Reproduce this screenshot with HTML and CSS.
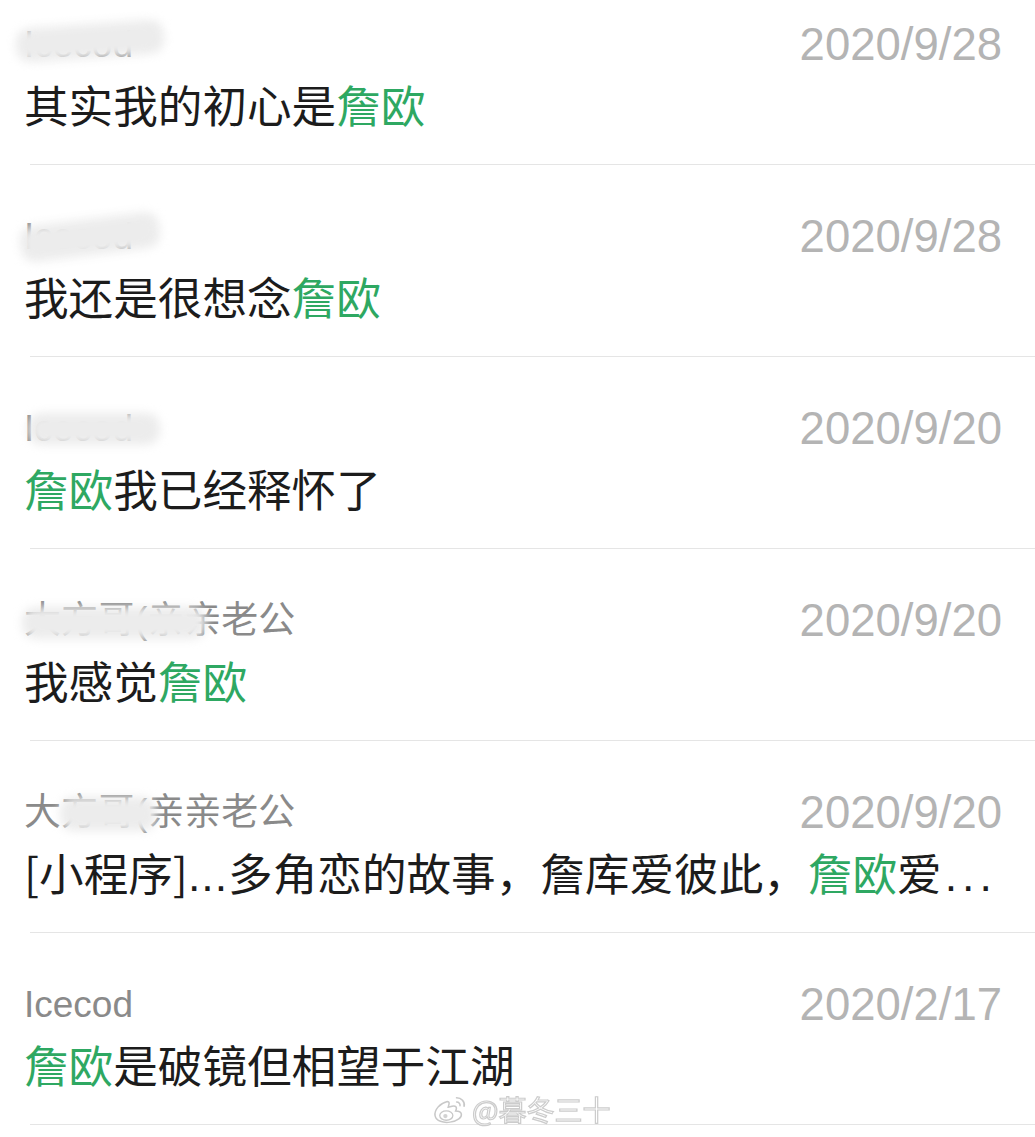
FILE: index.html
```html
<!DOCTYPE html>
<html lang="zh-CN">
<head>
<meta charset="utf-8">
<title>搜索结果</title>
<link rel="stylesheet" href="styles.css">
</head>
<body>
<div class="list">
  <div class="item first">
    <div class="body">
      <div class="head"><span class="name">Icecod<span class="smudge s1"></span></span><span class="date">2020/9/28</span></div>
      <div class="msg">其实我的初心是<em>詹欧</em></div>
    </div>
  </div>
  <div class="item">
    <div class="body">
      <div class="head"><span class="name">Icecod<span class="smudge s2"></span></span><span class="date">2020/9/28</span></div>
      <div class="msg">我还是很想念<em>詹欧</em></div>
    </div>
  </div>
  <div class="item">
    <div class="body">
      <div class="head"><span class="name">Icecod<span class="smudge s3"></span></span><span class="date">2020/9/20</span></div>
      <div class="msg"><em>詹欧</em>我已经释怀了</div>
    </div>
  </div>
  <div class="item">
    <div class="body">
      <div class="head"><span class="name">大方哥(亲亲老公<span class="smudge s4"></span></span><span class="date">2020/9/20</span></div>
      <div class="msg">我感觉<em>詹欧</em></div>
    </div>
  </div>
  <div class="item">
    <div class="body">
      <div class="head"><span class="name">大方哥(亲亲老公<span class="smudge s5"></span></span><span class="date">2020/9/20</span></div>
      <div class="msg">[小程序]<span class="dots">...</span>多角恋的故事，詹库爱彼此，<em>詹欧</em>爱<span class="dots end">...</span></div>
    </div>
  </div>
  <div class="item">
    <div class="body">
      <div class="head"><span class="name">Icecod</span><span class="date">2020/2/17</span></div>
      <div class="msg"><em>詹欧</em>是破镜但相望于江湖</div>
    </div>
  </div>
</div>
<div class="watermark">
  <svg class="wb" viewBox="0 0 40 32" width="38" height="30">
    <path d="M16 8 C8 10 2 17 3 23 C4 29 12 31 19 30 C27 29 32 25 31 21 C30 18 27 18 25 18 C27 14 25 12 21 13 C19 13.5 18 14 17 14 C18 11 19 8 16 8 Z" fill="#fff" stroke="#c4c4c4" stroke-width="1.6"/>
    <ellipse cx="15" cy="23" rx="7" ry="5" fill="#fff" stroke="#c4c4c4" stroke-width="1.4"/>
    <circle cx="14" cy="23.5" r="2.3" fill="#cfcfcf"/>
    <path d="M26 4 C31 4 35 8 34 13" fill="none" stroke="#c4c4c4" stroke-width="1.8" stroke-linecap="round"/>
    <path d="M26 8.5 C28.5 8.5 30 10.5 29.6 12.5" fill="none" stroke="#c4c4c4" stroke-width="1.6" stroke-linecap="round"/>
  </svg>
  <span class="wm-text">@暮冬三十</span>
</div>
</body>
</html>
```

FILE: styles.css
```css
html, body {
  margin: 0;
  padding: 0;
  background: #ffffff;
}
body {
  width: 1035px;
  height: 1137px;
  overflow: hidden;
  position: relative;
  font-family: "Liberation Sans", "Noto Sans CJK SC", sans-serif;
}
.list {
  display: flex;
  flex-direction: column;
}
.item {
  margin-left: 30px;
  border-bottom: 1px solid #e5e5e5;
  padding: 47px 0 32px 0;
}
.item.first {
  padding-top: 20px;
}
.body {
  margin-left: -6px;
  padding-right: 33px;
  display: flex;
  flex-direction: column;
  gap: 6px;
}
.head {
  display: flex;
  justify-content: space-between;
  align-items: center;
  height: 50px;
}
.name {
  position: relative;
  font-size: 37px;
  color: #8a8a8a;
  font-family: "Liberation Sans", "Noto Sans CJK SC", sans-serif;
  line-height: 50px;
}
.date {
  font-size: 45.5px;
  color: #b4b4b4;
  line-height: 50px;
}
.msg {
  font-family: "Noto Sans CJK SC", "Liberation Sans", sans-serif;
  font-size: 44.6px;
  line-height: 56px;
  height: 56px;
  color: #1c1c1c;
  white-space: nowrap;
}
.msg em {
  font-style: normal;
  color: #2ea862;
}
.dots {
  font-family: "Liberation Sans", sans-serif;
  line-height: 0;
  letter-spacing: 1px;
}
.dots.end {
  letter-spacing: 5px;
  margin-left: 3px;
}
.smudge {
  position: absolute;
  display: block;
  background: #ececec;
  filter: blur(5px);
  border-radius: 14px;
}
.s1 { left: -8px; top: 4px; width: 148px; height: 34px; transform: rotate(-4deg); }
.s2 { left: -4px; top: 7px; width: 140px; height: 36px; transform: rotate(-7deg); }
.s3 { left: 4px; top: 9px; width: 132px; height: 32px; }
.s4 { left: -2px; top: 11px; width: 184px; height: 32px; }
.s5 { left: 36px; top: 9px; width: 96px; height: 34px; }
.watermark {
  position: absolute;
  left: 432px;
  top: 1092px;
  display: flex;
  align-items: center;
  gap: 2px;
  opacity: 0.92;
}
.wm-text {
  font-family: "Noto Sans CJK SC", sans-serif;
  font-size: 28px;
  line-height: 34px;
  color: #ffffff;
  -webkit-text-stroke: 1.2px #c8c8c8;
}
```
